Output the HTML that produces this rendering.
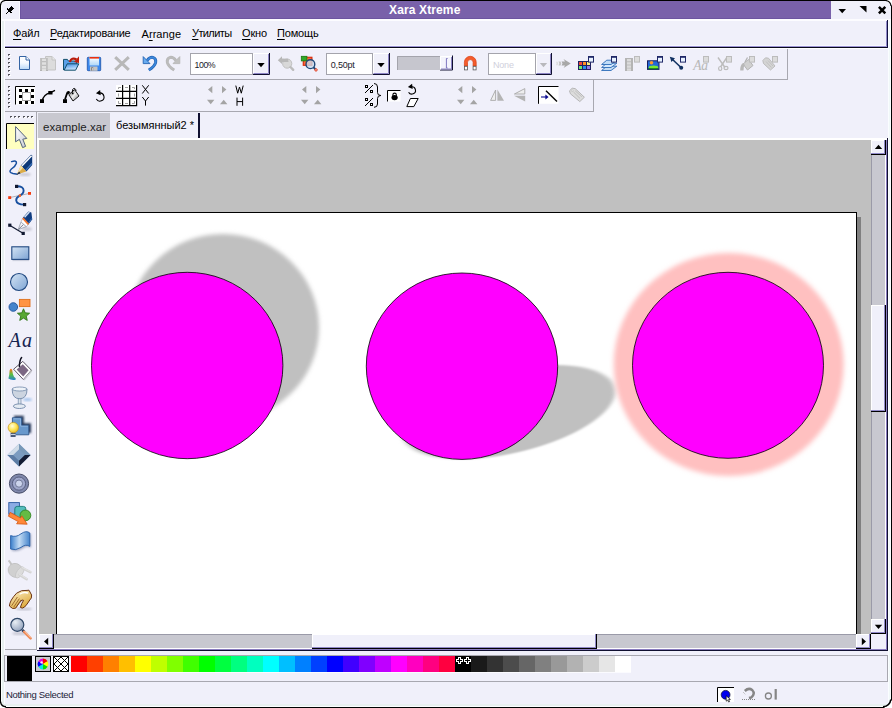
<!DOCTYPE html>
<html><head><meta charset="utf-8"><title>Xara Xtreme</title>
<style>
*{box-sizing:border-box;margin:0;padding:0}
html,body{width:892px;height:708px;overflow:hidden;background:#f0f0fa;font-family:"Liberation Sans",sans-serif}
.a{position:absolute}
#win{position:absolute;left:0;top:0;width:892px;height:708px;background:#f0f0fa;overflow:hidden}
.t{position:absolute;white-space:nowrap;color:#000;line-height:1}
.t u{text-decoration:underline;text-underline-offset:2.4px}
svg{position:absolute;overflow:visible}
.sbb{background:#f0f0fa;border-right:1px solid #000;border-bottom:1px solid #000;box-shadow:inset -1px -1px 0 #9088c8, inset 1px 1px 0 #fff}
.cb{background:#fff;border:1px solid #a0a0a8}
#win i{display:block;width:16px;height:16px;flex:none}
</style></head><body><div id="win">
<div class="a" style="left:0px;top:0px;width:892px;height:1px;background:#000;"></div>
<div class="a" style="left:0px;top:0px;width:1px;height:708px;background:#000;"></div>
<div class="a" style="left:891px;top:0px;width:1px;height:708px;background:#000;"></div>
<div class="a" style="left:0px;top:707px;width:892px;height:1px;background:#000;"></div>
<div class="a" style="left:1px;top:1px;width:1px;height:706px;background:#fcffff;"></div>
<div class="a" style="left:2px;top:19px;width:2px;height:688px;background:#e8f0f0;"></div>
<div class="a" style="left:4px;top:19px;width:1px;height:688px;background:#fbfbff;"></div>
<div class="a" style="left:888px;top:20px;width:3px;height:687px;background:#f0f8f8;"></div>
<div class="a" style="left:888px;top:20px;width:1px;height:687px;background:#fafdff;"></div>
<div class="a" style="left:890px;top:20px;width:1px;height:687px;background:#fafefe;"></div>
<div class="a" style="left:1px;top:704px;width:890px;height:2px;background:#e8f0f0;"></div>
<div class="a" style="left:1px;top:706px;width:890px;height:1px;background:#fbffff;"></div>
<div class="a" style="left:1px;top:1px;width:19px;height:1px;background:#fbfbff;"></div>
<div class="a" style="left:19px;top:1px;width:1px;height:18px;background:#fbfbff;"></div>
<div class="a" style="left:20px;top:1px;width:811px;height:18px;background:#7961aa;"></div>
<div class="a" style="left:20px;top:18px;width:811px;height:1px;background:#6c55a0;"></div>
<div class="a" style="left:20px;top:1px;width:1px;height:18px;background:#6c55a0;"></div>
<div class="t" style="left:389px;top:4px;font-size:12px;color:#fff;font-weight:bold;letter-spacing:0.13px">Xara Xtreme</div>
<div class="a" style="left:1px;top:19px;width:890px;height:2px;background:#fcfcff;"></div>
<div class="a" style="left:5px;top:45px;width:882px;height:1px;background:#f8f8ff;"></div>
<div class="a" style="left:5px;top:46px;width:882px;height:1px;background:#9c94d4;"></div>
<div class="a" style="left:5px;top:47px;width:883px;height:1px;background:#08081c;"></div>
<div class="a" style="left:5px;top:48px;width:883px;height:1px;background:#fff;"></div>
<div class="a" style="left:887px;top:20px;width:1px;height:28px;background:#101040;"></div>
<div class="a" style="left:886px;top:21px;width:1px;height:25px;background:#9088c8;"></div>
<div class="t" style="left:13px;top:28px;font-size:11px;color:#000;letter-spacing:-0.125px"><u>Ф</u>айл</div>
<div class="t" style="left:50px;top:28px;font-size:11px;color:#000;letter-spacing:-0.236px"><u>Р</u>едактирование</div>
<div class="t" style="left:141.5px;top:29px;font-size:11px;color:#000;letter-spacing:0.057px">A<u>r</u>range</div>
<div class="t" style="left:192px;top:28px;font-size:11px;color:#000;letter-spacing:-0.600px"><u>У</u>тилиты</div>
<div class="t" style="left:242px;top:28px;font-size:11px;color:#000;letter-spacing:-0.150px"><u>О</u>кно</div>
<div class="t" style="left:277px;top:28px;font-size:11px;color:#000;letter-spacing:-0.167px"><u>П</u>омощь</div>
<div class="a" style="left:5px;top:79px;width:783px;height:1px;background:#a8a8b0;"></div>
<div class="a" style="left:787px;top:49px;width:1px;height:31px;background:#a8a8b0;"></div>
<div class="a" style="left:5px;top:111px;width:589px;height:1px;background:#a8a8b0;"></div>
<div class="a" style="left:593px;top:80px;width:1px;height:32px;background:#a8a8b0;"></div>
<div class="a" style="left:36px;top:112px;width:1px;height:538px;background:#a8a8b0;"></div>
<div class="a" style="left:5px;top:649px;width:32px;height:1px;background:#a8a8b0;"></div>
<div class="a" style="left:38px;top:113px;width:72px;height:25px;background:#c8c8d0;"></div>
<div class="t" style="left:43px;top:122px;font-size:11.5px;color:#222;letter-spacing:0.04px">example.xar</div>
<div class="t" style="left:116px;top:120px;font-size:11px;color:#000;letter-spacing:-0.02px">безымянный2 *</div>
<div class="a" style="left:198px;top:113px;width:2px;height:25px;background:#101030;"></div>
<div class="a" id="canvas" style="left:39px;top:140px;width:832px;height:494px;background:#c0c0c0;overflow:hidden">
<div class="a" style="left:22px;top:77px;width:800px;height:420px;background:#808080"></div>
<div class="a" style="left:17px;top:72px;width:801px;height:425px;background:#fff;border:1px solid #000"></div>
<svg style="left:0;top:0" width="832" height="494" viewBox="39 140 832 494">
<defs>
<filter id="b1" x="-20%" y="-20%" width="140%" height="140%"><feGaussianBlur stdDeviation="1.9"/></filter>
<filter id="b2" x="-20%" y="-20%" width="140%" height="140%"><feGaussianBlur stdDeviation="2.6"/></filter>
</defs>
<ellipse cx="223" cy="327.5" rx="96" ry="93.5" fill="#c0c0c0" filter="url(#b1)"/>
<ellipse cx="187.2" cy="365.5" rx="95.7" ry="93.2" fill="#ff00ff" stroke="#000" stroke-width="0.8"/>
<ellipse cx="462" cy="366" rx="96" ry="93" fill="#c0c0c0" filter="url(#b1)" transform="matrix(1 0 -0.5 0.505 229.5 227.2)"/>
<ellipse cx="462" cy="366.2" rx="95.7" ry="93.2" fill="#ff00ff" stroke="#000" stroke-width="0.8"/>
<ellipse cx="728.7" cy="364.6" rx="115" ry="111.5" fill="#ffc0c0" filter="url(#b2)"/>
<ellipse cx="728" cy="365.3" rx="95.5" ry="93" fill="#ff00ff" stroke="#000" stroke-width="0.8"/>
</svg></div>
<div class="a" style="left:37px;top:138px;width:851px;height:2px;background:#fff;"></div>
<div class="a" style="left:37px;top:138px;width:2px;height:513px;background:#fff;"></div>
<div class="a" style="left:886px;top:140px;width:1px;height:510px;background:#8a7cc0;"></div>
<div class="a" style="left:887px;top:138px;width:1px;height:513px;background:#101030;"></div>
<div class="a" style="left:39px;top:649px;width:848px;height:1px;background:#8a7cc0;"></div>
<div class="a" style="left:37px;top:650px;width:851px;height:1px;background:#101030;"></div>
<div class="a" style="left:871px;top:140px;width:15px;height:494px;background:#c8c8d0;"></div>
<div class="a" style="left:871px;top:140px;width:1px;height:494px;background:#9a9aa8;"></div>
<div class="a" style="left:885px;top:140px;width:1px;height:494px;background:#fff;"></div>
<div class="a sbb" style="left:871px;top:140px;width:15px;height:15px"></div>
<div class="a sbb" style="left:871px;top:619px;width:15px;height:15px"></div>
<div class="a sbb" style="left:871px;top:305px;width:15px;height:107px"></div>
<div class="a" style="left:39px;top:634px;width:832px;height:15px;background:#c8c8d0;"></div>
<div class="a" style="left:39px;top:634px;width:832px;height:1px;background:#9a9aa8;"></div>
<div class="a" style="left:39px;top:648px;width:832px;height:1px;background:#fff;"></div>
<div class="a sbb" style="left:39px;top:634px;width:15px;height:15px"></div>
<div class="a sbb" style="left:856px;top:634px;width:15px;height:15px"></div>
<div class="a sbb" style="left:312px;top:634px;width:285px;height:15px"></div>
<div class="a" style="left:871px;top:634px;width:15px;height:15px;background:#f0f0fa;"></div>
<div class="a" style="left:4px;top:655px;width:884px;height:27px;border:1px solid #a8a8b0"></div>
<div class="a" style="left:7px;top:656px;width:25px;height:25px;background:#000;"></div>
<div class="a" style="left:71px;top:656px;height:16px;width:560px;display:flex"><i style="background:#ff0000"></i><i style="background:#ff4000"></i><i style="background:#ff8000"></i><i style="background:#ffbf00"></i><i style="background:#ffff00"></i><i style="background:#bfff00"></i><i style="background:#80ff00"></i><i style="background:#40ff00"></i><i style="background:#00ff00"></i><i style="background:#00ff40"></i><i style="background:#00ff80"></i><i style="background:#00ffbf"></i><i style="background:#00ffff"></i><i style="background:#00bfff"></i><i style="background:#0080ff"></i><i style="background:#0040ff"></i><i style="background:#0000ff"></i><i style="background:#4000ff"></i><i style="background:#8000ff"></i><i style="background:#bf00ff"></i><i style="background:#ff00ff"></i><i style="background:#ff00bf"></i><i style="background:#ff0080"></i><i style="background:#ff0040"></i><i style="background:#000000"></i><i style="background:#1a1a1a"></i><i style="background:#333333"></i><i style="background:#4c4c4c"></i><i style="background:#666666"></i><i style="background:#808080"></i><i style="background:#999999"></i><i style="background:#b2b2b2"></i><i style="background:#cccccc"></i><i style="background:#e6e6e6"></i><i style="background:#ffffff"></i></div>
<div class="t" style="left:6px;top:690px;font-size:9.5px;color:#1a2238;letter-spacing:-0.32px">Nothing Selected</div>
<svg id="ic" style="left:0;top:0" width="892" height="708" viewBox="0 0 892 708">
<defs>
<linearGradient id="gdoc" x1="0" y1="0" x2="0" y2="1"><stop offset="0" stop-color="#fff"/><stop offset="0.5" stop-color="#f4f9ff"/><stop offset="1" stop-color="#b8d8f8"/></linearGradient>
<linearGradient id="gfold" x1="0" y1="0" x2="0.3" y2="1"><stop offset="0" stop-color="#3c8ce0"/><stop offset="1" stop-color="#c8e4ff"/></linearGradient>
<linearGradient id="gsave" x1="0" y1="0" x2="0" y2="1"><stop offset="0" stop-color="#fff"/><stop offset="1" stop-color="#b0d8f8"/></linearGradient>
<linearGradient id="gblue" x1="0" y1="0" x2="1" y2="1"><stop offset="0" stop-color="#d4e4f4"/><stop offset="1" stop-color="#7ea4d4"/></linearGradient>
<linearGradient id="gflag" x1="0" y1="0" x2="1" y2="0"><stop offset="0" stop-color="#3c80cc"/><stop offset="0.45" stop-color="#c4dcf4"/><stop offset="1" stop-color="#4484cc"/></linearGradient>
<linearGradient id="garr" x1="0" y1="0" x2="1" y2="1"><stop offset="0" stop-color="#fff"/><stop offset="1" stop-color="#c8ccd4"/></linearGradient>
<linearGradient id="gspill" x1="0" y1="0" x2="0" y2="1"><stop offset="0" stop-color="#ff7020"/><stop offset="0.5" stop-color="#58c040"/><stop offset="1" stop-color="#2880d0"/></linearGradient>
<linearGradient id="gbk" x1="0" y1="0" x2="1" y2="1"><stop offset="0" stop-color="#606060"/><stop offset="0.5" stop-color="#f0f0f0"/><stop offset="1" stop-color="#808080"/></linearGradient>
<radialGradient id="glens" cx="0.35" cy="0.3" r="0.8"><stop offset="0" stop-color="#e8eef4"/><stop offset="1" stop-color="#8c9cb8"/></radialGradient>
<radialGradient id="gbulb" cx="0.4" cy="0.35" r="0.7"><stop offset="0" stop-color="#fffce0"/><stop offset="0.5" stop-color="#ffe860"/><stop offset="1" stop-color="#e8b820"/></radialGradient>
<linearGradient id="ghand" x1="0" y1="0" x2="0.6" y2="1"><stop offset="0" stop-color="#fff4d0"/><stop offset="1" stop-color="#dca838"/></linearGradient>
<filter id="bl1"><feGaussianBlur stdDeviation="0.8"/></filter>
</defs>
<rect x="8" y="54" width="2" height="1" fill="#505058"/><rect x="8" y="55" width="1" height="1" fill="#808088"/><rect x="9" y="55" width="2" height="1" fill="#fff"/>
<rect x="8" y="58" width="2" height="1" fill="#505058"/><rect x="8" y="59" width="1" height="1" fill="#808088"/><rect x="9" y="59" width="2" height="1" fill="#fff"/>
<rect x="8" y="62" width="2" height="1" fill="#505058"/><rect x="8" y="63" width="1" height="1" fill="#808088"/><rect x="9" y="63" width="2" height="1" fill="#fff"/>
<rect x="8" y="66" width="2" height="1" fill="#505058"/><rect x="8" y="67" width="1" height="1" fill="#808088"/><rect x="9" y="67" width="2" height="1" fill="#fff"/>
<rect x="8" y="70" width="2" height="1" fill="#505058"/><rect x="8" y="71" width="1" height="1" fill="#808088"/><rect x="9" y="71" width="2" height="1" fill="#fff"/>
<rect x="8" y="74" width="2" height="1" fill="#505058"/><rect x="8" y="75" width="1" height="1" fill="#808088"/><rect x="9" y="75" width="2" height="1" fill="#fff"/>
<rect x="8" y="86" width="2" height="1" fill="#505058"/><rect x="8" y="87" width="1" height="1" fill="#808088"/><rect x="9" y="87" width="2" height="1" fill="#fff"/>
<rect x="8" y="90" width="2" height="1" fill="#505058"/><rect x="8" y="91" width="1" height="1" fill="#808088"/><rect x="9" y="91" width="2" height="1" fill="#fff"/>
<rect x="8" y="94" width="2" height="1" fill="#505058"/><rect x="8" y="95" width="1" height="1" fill="#808088"/><rect x="9" y="95" width="2" height="1" fill="#fff"/>
<rect x="8" y="98" width="2" height="1" fill="#505058"/><rect x="8" y="99" width="1" height="1" fill="#808088"/><rect x="9" y="99" width="2" height="1" fill="#fff"/>
<rect x="8" y="102" width="2" height="1" fill="#505058"/><rect x="8" y="103" width="1" height="1" fill="#808088"/><rect x="9" y="103" width="2" height="1" fill="#fff"/>
<rect x="8" y="106" width="2" height="1" fill="#505058"/><rect x="8" y="107" width="1" height="1" fill="#808088"/><rect x="9" y="107" width="2" height="1" fill="#fff"/>
<rect x="10" y="116" width="2" height="1" fill="#505058"/><rect x="10" y="117" width="1" height="1" fill="#808088"/><rect x="11" y="117" width="2" height="1" fill="#fff"/>
<rect x="14" y="116" width="2" height="1" fill="#505058"/><rect x="14" y="117" width="1" height="1" fill="#808088"/><rect x="15" y="117" width="2" height="1" fill="#fff"/>
<rect x="18" y="116" width="2" height="1" fill="#505058"/><rect x="18" y="117" width="1" height="1" fill="#808088"/><rect x="19" y="117" width="2" height="1" fill="#fff"/>
<rect x="23" y="116" width="2" height="1" fill="#505058"/><rect x="23" y="117" width="1" height="1" fill="#808088"/><rect x="24" y="117" width="2" height="1" fill="#fff"/>
<rect x="27" y="116" width="2" height="1" fill="#505058"/><rect x="27" y="117" width="1" height="1" fill="#808088"/><rect x="28" y="117" width="2" height="1" fill="#fff"/>
<rect x="31" y="116" width="2" height="1" fill="#505058"/><rect x="31" y="117" width="1" height="1" fill="#808088"/><rect x="32" y="117" width="2" height="1" fill="#fff"/>
<polygon points="0,0 5,0 0,5" fill="#fff"/><path d="M0.5,5.5 Q0.8,0.8 5.5,0.5" fill="none" stroke="#000" stroke-width="1.2"/>
<polygon points="892,0 886,0 892,6" fill="#fff"/><path d="M891,6 Q890.6,1 885.5,0.5" fill="none" stroke="#000" stroke-width="1.2"/>
<polygon points="0,708 0,702 6,708" fill="#fff"/><path d="M0.5,701.5 Q1,706.5 6,706.8" fill="none" stroke="#000" stroke-width="1.4"/>
<polygon points="892,708 892,700 884,708" fill="#fff"/><path d="M890.8,699.5 Q890,706 883,706.8" fill="none" stroke="#000" stroke-width="1.6"/>
<g fill="#000" shape-rendering="crispEdges"><rect x="11" y="6" width="1" height="1"/><rect x="10" y="7" width="1" height="1"/><rect x="11" y="7" width="1" height="1"/><rect x="12" y="7" width="1" height="1"/><rect x="7" y="8" width="1" height="1"/><rect x="9" y="8" width="1" height="1"/><rect x="10" y="8" width="1" height="1"/><rect x="11" y="8" width="1" height="1"/><rect x="12" y="8" width="1" height="1"/><rect x="13" y="8" width="1" height="1"/><rect x="7" y="9" width="1" height="1"/><rect x="8" y="9" width="1" height="1"/><rect x="9" y="9" width="1" height="1"/><rect x="10" y="9" width="1" height="1"/><rect x="11" y="9" width="1" height="1"/><rect x="12" y="9" width="1" height="1"/><rect x="8" y="10" width="1" height="1"/><rect x="9" y="10" width="1" height="1"/><rect x="10" y="10" width="1" height="1"/><rect x="11" y="10" width="1" height="1"/><rect x="8" y="11" width="1" height="1"/><rect x="9" y="11" width="1" height="1"/><rect x="10" y="11" width="1" height="1"/><rect x="7" y="12" width="1" height="1"/><rect x="10" y="12" width="1" height="1"/><rect x="11" y="12" width="1" height="1"/><rect x="6" y="13" width="1" height="1"/></g>
<polygon points="838.5,9 846,9 842.2,13.3" fill="#000"/>
<polygon points="859.5,6 866.5,6 866.5,12.5" fill="#000"/>
<path d="M878.9,6.9 L885.3,13.3 M885.3,6.9 L878.9,13.3" stroke="#000" stroke-width="2.5" fill="none"/>
<path d="M19.5,56.5 H26 L29.5,60 V69.5 H19.5 Z" fill="url(#gdoc)" stroke="#3464a4" stroke-width="1"/><path d="M26,56.5 V60 H29.5" fill="#fff" stroke="#3464a4" stroke-width="1"/>
<path d="M45.5,56.5 H52 L55.5,60 V70 H45.5 Z" fill="#dcdcdc" stroke="#c4c4c4"/><path d="M52,56.5 V60 H55.5" fill="#e8e8e8" stroke="#c4c4c4"/>
<rect x="40" y="58" width="8" height="13" fill="#b4b4b4"/>
<g fill="#e0e0e0"><rect x="42" y="58.6" width="4" height="2.6"/><rect x="42" y="62.2" width="4" height="2.6"/><rect x="42" y="65.8" width="4" height="2.6"/><rect x="42" y="68.60000000000001" width="4" height="2.6"/></g>
<g fill="#ececec"><rect x="40.4" y="58.5" width="1" height="1"/><rect x="46.6" y="58.5" width="1" height="1"/><rect x="40.4" y="60.5" width="1" height="1"/><rect x="46.6" y="60.5" width="1" height="1"/><rect x="40.4" y="62.5" width="1" height="1"/><rect x="46.6" y="62.5" width="1" height="1"/><rect x="40.4" y="64.5" width="1" height="1"/><rect x="46.6" y="64.5" width="1" height="1"/><rect x="40.4" y="66.5" width="1" height="1"/><rect x="46.6" y="66.5" width="1" height="1"/><rect x="40.4" y="68.5" width="1" height="1"/><rect x="46.6" y="68.5" width="1" height="1"/></g>
<path d="M63.5,70 V59.4 H67.4 L68.4,61 H76.6 V64" fill="#5aa0e8" stroke="#14506c" stroke-width="1"/>
<path d="M64.2,70.2 L67.2,63.8 H78.8 L75.6,70.2 Z" fill="url(#gfold)" stroke="#14506c" stroke-width="1" stroke-linejoin="round"/>
<path d="M69.8,62 Q71.6,57 76.6,59.4" fill="none" stroke="#b81c0c" stroke-width="2.1"/><polygon points="74,61.9 79,56.2 79,63" fill="#c0200c"/>
<rect x="87.3" y="57.3" width="13.4" height="13.4" rx="0.8" fill="#3c88ec" stroke="#1c50a8" stroke-width="0.8"/>
<rect x="89.5" y="57" width="9.5" height="8.5" fill="url(#gsave)"/><rect x="89.5" y="57" width="9.5" height="1.6" fill="#e83010"/>
<rect x="90" y="66.5" width="7.5" height="4.3" fill="#c4c4c4"/><rect x="91.2" y="67.3" width="2" height="3.3" fill="#787878"/><rect x="92" y="68" width="1.2" height="2.6" fill="#c4c4c4"/>
<path d="M115.2,57.2 L128.8,69.8 M128.8,57.2 L115.2,69.8" stroke="#b8b8b8" stroke-width="3" fill="none"/>
<g><path d="M147.2,60.4 Q149.8,57 152.8,57.4 Q156.4,58.4 155.6,62.6 Q154.4,66.8 148.8,70" fill="none" stroke="#2464b4" stroke-width="3"/><path d="M147.2,60.4 Q149.8,57 152.8,57.4 Q156.4,58.4 155.6,62.6 Q154.4,66.8 148.8,70" fill="none" stroke="#3c88dc" stroke-width="1.6"/><polygon points="143.2,56.6 143.2,63.6 150,63.6" fill="#68acf0" stroke="#2464b4" stroke-width="0.9" stroke-linejoin="round"/></g>
<g transform="translate(323,0) scale(-1,1)"><path d="M147.2,60.4 Q149.8,57 152.8,57.4 Q156.4,58.4 155.6,62.6 Q154.4,66.8 148.8,70" fill="none" stroke="#b8b8b8" stroke-width="3"/><path d="M147.2,60.4 Q149.8,57 152.8,57.4 Q156.4,58.4 155.6,62.6 Q154.4,66.8 148.8,70" fill="none" stroke="#bcbcbc" stroke-width="1.6"/><polygon points="143.2,56.6 143.2,63.6 150,63.6" fill="#c0c0c0" stroke="#b8b8b8" stroke-width="0.9" stroke-linejoin="round"/></g>
<rect x="190.5" y="53.5" width="62" height="21" fill="#fff" stroke="#a4a4ac"/>
<rect x="253" y="53" width="17" height="22" fill="#f0f0fa"/>
<path d="M269.5,53 V74.5 H253" fill="none" stroke="#101030" stroke-width="1"/>
<path d="M268.5,54 V73.5 H253.5" fill="none" stroke="#8c84c4" stroke-width="1"/>
<path d="M253.5,73 V53.5 H268" fill="none" stroke="#fff" stroke-width="1"/>
<polygon points="257.3,63 264.7,63 261.0,67.2" fill="#000"/>
<rect x="326.5" y="53.5" width="46" height="21" fill="#fff" stroke="#a4a4ac"/>
<rect x="373" y="53" width="17" height="22" fill="#f0f0fa"/>
<path d="M389.5,53 V74.5 H373" fill="none" stroke="#101030" stroke-width="1"/>
<path d="M388.5,54 V73.5 H373.5" fill="none" stroke="#8c84c4" stroke-width="1"/>
<path d="M373.5,73 V53.5 H388" fill="none" stroke="#fff" stroke-width="1"/>
<polygon points="377.3,63 384.7,63 381.0,67.2" fill="#000"/>
<rect x="488.5" y="53.5" width="47" height="21" fill="#fff" stroke="#a4a4ac"/>
<rect x="536" y="53" width="16" height="22" fill="#f0f0fa"/>
<path d="M551.5,53 V74.5 H536" fill="none" stroke="#101030" stroke-width="1"/>
<path d="M550.5,54 V73.5 H536.5" fill="none" stroke="#8c84c4" stroke-width="1"/>
<path d="M536.5,73 V53.5 H550" fill="none" stroke="#fff" stroke-width="1"/>
<polygon points="539.8,63 547.2,63 543.5,67.2" fill="#b8b8bc"/>
<text x="194.5" y="68.3" font-size="8.8" fill="#1a1a2a" letter-spacing="-0.45">100%</text>
<text x="330.8" y="68.3" font-size="9" fill="#1a1a2a" letter-spacing="-0.2">0,50pt</text>
<text x="493" y="68.3" font-size="9" fill="#d0d0dc" letter-spacing="-0.2">None</text>
<circle cx="287.2" cy="63.6" r="4.6" fill="#d8d8d8" stroke="#c0c0c0" stroke-width="1"/><path d="M290.5,67 L293.2,69.8" stroke="#bcbcbc" stroke-width="2.4" stroke-linecap="round"/>
<path d="M277.8,60.2 L282,56.2 L282,58.6 L288,58.8 L288.5,62 L282,62 L282,64 Z" fill="#b8b8b8"/>
<rect x="303.3" y="57.3" width="8.6" height="8" fill="#ff6838" stroke="#d83010" stroke-width="1.2"/>
<rect x="301.3" y="56.3" width="5.6" height="4.6" fill="#30a828" stroke="#187810" stroke-width="0.8"/>
<circle cx="310.4" cy="64.2" r="4.4" fill="#c8dcf0" fill-opacity="0.78" stroke="#204878" stroke-width="1.4"/>
<path d="M313.6,67.4 L315.4,69.2" stroke="#204878" stroke-width="2"/><circle cx="316" cy="69.9" r="1.2" fill="#fff" stroke="#e03010" stroke-width="1"/>
<rect x="397" y="56" width="44" height="14" fill="#c6c6ce"/><path d="M397.5,70 V56.5 H441" fill="none" stroke="#a4a4ac"/>
<rect x="440" y="56" width="13" height="14.5" fill="#f4f4fc"/><path d="M452.5,55.5 V70 H440" fill="none" stroke="#101030"/><path d="M451.5,57 V69 H441" fill="none" stroke="#8c84c4"/><path d="M440.5,69.5 V56.5 H451" fill="none" stroke="#fff"/>
<path d="M447.6,58.5 H446.4 V68 H447.6" fill="none" stroke="#7068b8" stroke-width="0.9"/>
<path d="M464.4,66 V62.2 A5.9,5.9 0 0 1 476.2,62.2 V66 H473.1 V62.4 A2.8,2.8 0 0 0 467.5,62.4 V66 Z" fill="#f45c2c" stroke="#d83c10" stroke-width="0.7"/>
<rect x="464.5" y="66.3" width="3" height="3.6" fill="#fff" stroke="#585858" stroke-width="0.8"/><rect x="473.1" y="66.3" width="3" height="3.6" fill="#fff" stroke="#585858" stroke-width="0.8"/>
<path d="M563.5,59 L570.8,63.5 L563.5,68 L565,65.5 L561.5,65.5 L562.5,63.5 L561.5,61.5 L565,61.5 Z" fill="#a8a8a8"/><path d="M558.5,61.5 h2 l0.8,2 l-0.8,2 h-2 l0.8,-2 Z" fill="#c4c4c4"/><path d="M556,61.8 h1.6 l0.6,1.7 l-0.6,1.7 h-1.6 l0.6,-1.7 Z" fill="#dcdcdc"/>
<rect x="578" y="61" width="13" height="9" fill="#202060"/>
<rect x="579" y="62" width="3" height="3" fill="#f04838"/>
<rect x="583" y="62" width="3" height="3" fill="#ff9020"/>
<rect x="587" y="62" width="3" height="3" fill="#f8f080"/>
<rect x="579" y="66" width="3" height="3" fill="#70e868"/>
<rect x="583" y="66" width="3" height="3" fill="#2090f0"/>
<rect x="587" y="66" width="3" height="3" fill="#9078e8"/>
<rect x="588.5" y="56.5" width="5" height="5.6" fill="#e8f2ff" stroke="#202868"/><rect x="588" y="56" width="6" height="1.8" fill="#202868"/>
<path d="M601.6,70.5 L606.8,66.2 H616.8 L611,70.5 Z" fill="#c4dcf4" stroke="#2c6cb8" stroke-width="0.9" stroke-linejoin="round"/>
<path d="M601.6,67.5 L606.8,63.2 H616.8 L611,67.5 Z" fill="#d4e8fc" stroke="#2c6cb8" stroke-width="0.9" stroke-linejoin="round"/>
<path d="M601.6,64.5 L606.8,60.2 H616.8 L611,64.5 Z" fill="#c0dcf8" stroke="#2c6cb8" stroke-width="0.9" stroke-linejoin="round"/>
<rect x="611.5" y="56.5" width="5" height="5.6" fill="#e8f2ff" stroke="#202868"/><rect x="611" y="56" width="6" height="1.8" fill="#202868"/>
<rect x="625" y="58" width="8" height="13" fill="#b4b4b4"/><g fill="#dcdcdc"><rect x="627" y="59" width="4" height="2.4"/><rect x="627" y="62.2" width="4" height="2.4"/><rect x="627" y="65.4" width="4" height="2.4"/><rect x="627" y="68.4" width="4" height="2.4"/></g>
<rect x="634.5" y="56.5" width="5" height="5.6" fill="#dcdcdc" stroke="#bcbcbc"/>
<rect x="647.5" y="60.8" width="11.5" height="8.6" fill="#2468d8" stroke="#182060"/><circle cx="651.5" cy="62.8" r="1.8" fill="#ff9828"/><ellipse cx="653.5" cy="67.2" rx="4.8" ry="1.7" fill="#78ec30"/><rect x="648" y="68.2" width="10.5" height="1" fill="#107818"/>
<rect x="657.5" y="56.5" width="5" height="5.6" fill="#e8f2ff" stroke="#202868"/><rect x="657" y="56" width="6" height="1.8" fill="#202868"/>
<path d="M681,67.5 L671.5,58.5" stroke="#103060" stroke-width="1.6"/><circle cx="681.2" cy="67.8" r="2" fill="#103060"/><polygon points="669.8,56.8 675,58.2 671.4,62" fill="#103060"/>
<rect x="680.5" y="56.5" width="5" height="5.6" fill="#e8f2ff" stroke="#202868"/><rect x="680" y="56" width="6" height="1.8" fill="#202868"/>
<text x="693.2" y="70.4" font-family="Liberation Serif" font-style="italic" font-size="13.6" fill="#b8b8b8" letter-spacing="-0.2">Aa</text>
<rect x="703.5" y="56.5" width="5" height="5.6" fill="#dcdcdc" stroke="#bcbcbc"/>
<path d="M718,57.5 L725,67.5 M726.5,58 L720.5,67" stroke="#bcbcbc" stroke-width="1.4" fill="none"/><ellipse cx="720.2" cy="68.5" rx="1.6" ry="2" fill="none" stroke="#bcbcbc" stroke-width="1.2"/><ellipse cx="726" cy="68" rx="2" ry="1.6" fill="none" stroke="#bcbcbc" stroke-width="1.2"/>
<rect x="726.5" y="56.5" width="5" height="5.6" fill="#dcdcdc" stroke="#bcbcbc"/>
<path d="M743,64 L748.5,59.5 L753,65.5 L747.5,70 Z" fill="#d0d0d0" stroke="#b4b4b4"/><path d="M743,63 Q740,65 740.2,70.5 H743.5 Q743,67 745,65" fill="#b8b8b8"/><path d="M745,62 L747.5,57.5" stroke="#b0b0b0" stroke-width="1.2"/>
<rect x="749.5" y="56.5" width="5" height="5.6" fill="#dcdcdc" stroke="#bcbcbc"/>
<path d="M762.8,60.5 L765.5,57.8 L768.5,58.2 L775,66 L770.5,70 L763.5,63.5 Z" fill="#d4d4d4" stroke="#b8b8b8" stroke-width="0.9"/><path d="M766,61.5 L771.5,67.5 M768,60.5 L773,66" stroke="#bcbcbc" stroke-width="0.8"/>
<rect x="772.5" y="56.5" width="5" height="5.6" fill="#dcdcdc" stroke="#bcbcbc"/>
<rect x="15" y="86" width="20" height="18.5" fill="#fff"/><path d="M15.5,104.5 V86.5 H35" fill="none" stroke="#000" stroke-width="1"/>
<g fill="#000" shape-rendering="crispEdges"><rect x="19" y="89" width="3" height="3"/><rect x="25" y="89" width="3" height="3"/><rect x="31" y="89" width="3" height="3"/><rect x="19" y="95" width="3" height="3"/><rect x="31" y="95" width="3" height="3"/><rect x="19" y="101" width="3" height="3"/><rect x="25" y="101" width="3" height="3"/><rect x="31" y="101" width="3" height="3"/></g>
<rect x="22.5" y="92.5" width="8" height="8" fill="#fff" stroke="#a0a0a0"/>
<path d="M42,101 Q44,94 50,92.8 L55,90.3" fill="none" stroke="#000" stroke-width="1.3"/><rect x="40" y="99.2" width="4" height="3.8" fill="#000"/><rect x="48.3" y="91" width="4.2" height="3.5" fill="#000"/>
<rect x="63" y="99.2" width="4" height="3.8" fill="#000"/><path d="M65,99.5 L66.8,94 L69.5,91.8" stroke="#000" stroke-width="1.8" fill="none"/><path d="M66,93.5 q0.6,-2.6 3.4,-2.4 l-0.6,3 z" fill="#000"/>
<path d="M68.8,94.6 L74.6,89.6 L79,96 L73,101 Z" fill="url(#gbk)" stroke="#000" stroke-width="0.9"/><path d="M72.5,92.5 V89.5 Q74,87 75.8,89.5 L76,91" fill="none" stroke="#000" stroke-width="0.9"/><circle cx="72.7" cy="93.4" r="0.9" fill="#000"/>
<path d="M99.54,92.92 A4.1,4.1 0 1 1 96.35,99.05" fill="none" stroke="#000" stroke-width="1.1"/>
<polygon points="95.94,93.22 100.14,89.92 100.74,95.32" fill="#000"/>
<rect x="116" y="85" width="21" height="21" fill="#fff"/>
<g stroke="#a0a0a0" stroke-width="1" fill="none"><path d="M118.5,89 V87.5 H121 M125,87.5 H128 M132,87.5 H134.5 V89 M118.5,93.5 V96.5 M134.5,93.5 V96.5 M118.5,101 V103.5 H121 M125,103.5 H128 M132,103.5 H134.5 V101"/></g>
<g stroke="#000" stroke-width="1.2" fill="none"><path d="M122.6,85 V106 M129.7,85 V106 M136.6,85 V106 M116,91.3 H137 M116,98.4 H137 M116,105.6 H137.2"/></g>
<g stroke="#000" stroke-width="1" fill="none"><path d="M142.3,85.3 L148.7,93.5 M148.7,85.3 L142.3,93.5 M142.3,97 L145.5,101 L148.7,97 M145.5,101 V105.6"/></g>
<g fill="#a4a4a4"><polygon points="208,89.6 212.3,86 212.3,93.2"/><polygon points="222,86 222,93.2 226.4,89.6"/><polygon points="207,99.8 214.4,99.8 210.7,104.2"/><polygon points="220,104.2 227.4,104.2 223.7,99.8"/></g>
<g fill="#a4a4a4"><polygon points="302,89.6 306.3,86 306.3,93.2"/><polygon points="316,86 316,93.2 320.4,89.6"/><polygon points="301,99.8 308.4,99.8 304.7,104.2"/><polygon points="314,104.2 321.4,104.2 317.7,99.8"/></g>
<g fill="#a4a4a4"><polygon points="458,89.6 462.3,86 462.3,93.2"/><polygon points="472,86 472,93.2 476.4,89.6"/><polygon points="457,99.8 464.4,99.8 460.7,104.2"/><polygon points="470,104.2 477.4,104.2 473.7,99.8"/></g>
<g stroke="#000" stroke-width="1" fill="none"><path d="M235.8,85.6 L237.7,93.2 L239.5,87 L241.3,93.2 L243.2,85.6 M237,97.6 V105.8 M242.6,97.6 V105.8 M237,101.6 H242.6"/></g>
<path d="M365,93 L373,85" stroke="#000" stroke-width="1"/><rect x="365.5" y="85.5" width="2" height="2" fill="#fff" stroke="#000"/><rect x="370.5" y="90.5" width="2" height="2" fill="#fff" stroke="#000"/>
<path d="M365,106 L373,98" stroke="#000" stroke-width="1"/><rect x="365.5" y="98.5" width="2" height="2" fill="#fff" stroke="#000"/><rect x="370.5" y="103.5" width="2" height="2" fill="#fff" stroke="#000"/>
<path d="M374,83.5 Q377.5,83.5 377.5,87 V92.5 Q377.5,95.5 380.8,95.5 Q377.5,95.5 377.5,98.5 V104 Q377.5,107.3 374,107.3" fill="none" stroke="#000" stroke-width="1"/>
<rect x="387" y="90" width="13.5" height="11.5" fill="#fff"/><path d="M387.5,101.5 V90.5 H400.5" fill="none" stroke="#000" stroke-width="1"/>
<ellipse cx="394.6" cy="97.6" rx="3.1" ry="2.6" fill="#000"/><path d="M392.9,96 V94.8 A1.7,1.7 0 0 1 396.3,94.8 V96" fill="none" stroke="#000" stroke-width="1.1"/>
<path d="M411.48,86.71 A3.7,3.7 0 1 1 408.60,92.25" fill="none" stroke="#000" stroke-width="1.1"/>
<polygon points="407.88,87.01 412.08,83.71 412.68,89.11" fill="#000"/>
<polygon points="406.8,106.6 413.8,106.6 418.2,98.5 410.4,98.5" fill="#fff" stroke="#000" stroke-width="1"/>
<polygon points="490.6,100.4 495.6,90 495.6,100.4" fill="#eee" stroke="#a8a8a8" stroke-width="0.9"/><polygon points="497.4,89.6 497.4,100.8 504,100.8" fill="#b4b4b4"/>
<polygon points="514.4,94 524.8,88.6 524.8,94" fill="#eee" stroke="#a8a8a8" stroke-width="0.9"/><polygon points="514,95.8 525.2,95.8 525.2,101.6" fill="#b4b4b4"/>
<rect x="538" y="86" width="20.5" height="17.8" fill="#fff"/><path d="M538.5,103.8 V86.5 H558.5" fill="none" stroke="#000" stroke-width="1"/>
<path d="M546,90.8 L557,101.6" stroke="#000" stroke-width="1.4"/><path d="M541,97 H546.5" stroke="#0a0a90" stroke-width="1.1"/><polygon points="545.4,94.4 548.6,97 545.4,99.6" fill="#0a0a90"/>
<path d="M569.5,90.8 L572.2,88.2 L575.2,88.6 L584.4,97.2 L579.8,101.6 L570.4,93.8 Z" fill="#dcdcdc" stroke="#b0b0b0" stroke-width="0.9"/><path d="M573.5,92 L580,98.4 M575.2,90.8 L581.8,96.8" stroke="#b8b8b8" stroke-width="0.8"/><circle cx="572.3" cy="90.8" r="0.8" fill="#fff" stroke="#aaa" stroke-width="0.5"/>
<rect x="6" y="123" width="28" height="26" fill="#ffffc0"/><path d="M6.5,149 V123.5 H34" fill="none" stroke="#000"/>
<path d="M15.6,126.6 L15.6,141.8 L19.4,139.4 L22.6,147.6 L25.6,146.4 L22.8,139.2 L26.8,138.4 Z" fill="url(#garr)" stroke="#54647c" stroke-width="1" stroke-linejoin="round"/>
<path d="M11.6,161.6 Q17,160 16.4,163.2 Q15.6,166 11.4,169 Q7.8,172.4 13,173.6 L17.5,174.2" fill="none" stroke="#1850a0" stroke-width="1.5" stroke-linecap="round"/>
<ellipse cx="25" cy="174.5" rx="6" ry="1.6" fill="#c8c8d4" filter="url(#bl1)"/>
<path d="M20.8,165.6 L31,154.8 L32.2,155.2 L32.2,165 L26.4,171.6 Z" fill="#0c3878"/><path d="M21.8,166 L31.6,155.8" stroke="#fff" stroke-width="1.5"/><path d="M25.8,170.2 L32,163.4" stroke="#3c74bc" stroke-width="1.2"/>
<path d="M20.8,165.6 L26.4,171.6 L16.8,174.4 Z" fill="#dcac48"/><path d="M20.8,165.6 L23,167.8 L16.8,174.4 Z" fill="#f8e4a8"/><path d="M19.2,171.6 L20.6,173.4 L16.6,174.6 Z" fill="#203050"/>
<path d="M9.5,197.6 L29.5,193.4" stroke="#a8a8b0" stroke-width="0.9"/>
<path d="M16.5,186.2 Q23.6,186 23.6,190.6 Q23.6,194 19.8,195.6 Q16,197.6 16.2,200.4 Q16.6,204.6 24.4,204.6" fill="none" stroke="#1850a0" stroke-width="1.9"/>
<rect x="15" y="184.8" width="3.2" height="3.2" fill="#101830"/><rect x="23" y="203" width="3.2" height="3.2" fill="#101830"/>
<rect x="8.2" y="196.2" width="3" height="2.8" fill="#f43c10"/><rect x="28" y="192" width="3" height="2.8" fill="#f43c10"/><rect x="18.8" y="194.4" width="2.2" height="2.4" fill="#f46020"/>
<ellipse cx="27" cy="229" rx="5" ry="1.8" fill="#c8c8d4" filter="url(#bl1)"/>
<path d="M9.6,225.2 L23.4,233.4" stroke="#101830" stroke-width="1.2"/><rect x="8.2" y="223.6" width="3.2" height="3.2" fill="#101830"/><rect x="21.6" y="231.8" width="3.2" height="3.2" fill="#101830"/>
<path d="M18.2,229.6 L21,222 L26.4,226.6 Z" fill="#f4f4f8" stroke="#8890a0" stroke-width="0.7"/><path d="M18.6,229.2 L23.4,224.6" stroke="#303850" stroke-width="0.6"/>
<path d="M21,222 L22.8,218 L28.4,224.4 L26.4,226.6 Z" fill="#fff" stroke="#98a0b0" stroke-width="0.6"/>
<path d="M22.8,217.8 L28.4,211.6 L31.4,212.4 L32.2,219.4 L28.4,224.6 Z" fill="#103c80"/><path d="M22.8,218.2 L28.4,224.4" stroke="#f47830" stroke-width="1.8"/><path d="M24.6,217.2 L29.4,212" stroke="#d8e4f4" stroke-width="1.4"/><path d="M28.6,223 L31.8,218.4" stroke="#3c74bc" stroke-width="1"/>
<rect x="11.8" y="246.8" width="17" height="12.6" fill="url(#gblue)" stroke="#204880" stroke-width="1.1"/><rect x="12.5" y="260.2" width="16.6" height="0.9" fill="#c4c8d8"/>
<circle cx="19" cy="282" r="8.5" fill="url(#gblue)" stroke="#204880" stroke-width="1.1"/>
<circle cx="13.3" cy="307" r="4.3" fill="#4484cc" stroke="#20549c" stroke-width="0.9"/>
<rect x="19.4" y="299.4" width="10.6" height="7.2" fill="#ff9444" stroke="#e0701c" stroke-width="0.9"/>
<polygon points="23.50,308.80 25.20,312.85 29.59,313.22 26.26,316.10 27.26,320.38 23.50,318.10 19.74,320.38 20.74,316.10 17.41,313.22 21.80,312.85" fill="#58a834" stroke="#307418" stroke-width="0.9" stroke-linejoin="round"/>
<text x="8.4" y="346.6" font-family="Liberation Serif" font-style="italic" font-size="20" fill="#162450" letter-spacing="1.3">Aa</text>
<path d="M8.4,378.6 Q9.4,376 9.6,370.6 Q10.6,367.4 12.2,370 Q12.6,374 14,376.8 Q16.6,378.4 15.6,379.8 Q11,380.6 8.4,378.6 Z" fill="url(#gspill)"/>
<path d="M13.6,369.2 L22.8,361.4 L31.4,370.2 L23.4,379.6 Z" fill="#fff" stroke="#484050" stroke-width="0.9"/><path d="M16.6,369.4 L22.8,364.2 L28.6,370.2 L23.2,376.6 Z" fill="#7c6884"/><path d="M24,380 L31.6,371" stroke="#c8c8d0" stroke-width="1.4"/>
<path d="M19.4,366.6 Q19.6,360 21.6,357.6" fill="none" stroke="#101020" stroke-width="1.5" stroke-linecap="round"/>
<ellipse cx="27.5" cy="399.6" rx="4.4" ry="1.5" fill="#a4c4ec" filter="url(#bl1)"/>
<path d="M12.2,389 Q12,398.6 19.6,398.8 Q27.2,398.6 27,389 Z" fill="#ccd4e0" stroke="#7088a8" stroke-width="0.9"/><ellipse cx="19.6" cy="389" rx="7.4" ry="2" fill="#eef2f8" stroke="#7088a8" stroke-width="0.8"/>
<rect x="18.2" y="398.8" width="2.8" height="6.4" fill="#dce4ec" stroke="#7088a8" stroke-width="0.7"/><ellipse cx="19.4" cy="406.2" rx="6" ry="2.3" fill="#e4eaf2" stroke="#7088a8" stroke-width="0.9"/>
<path d="M14,415.8 H23.8 V423.2 H31 V433 H14 Z" fill="#283858" filter="url(#bl1)"/>
<path d="M12.4,417.8 H21.6 V425.2 H28.8 V434.8 H12.4 Z" fill="#6898cc" stroke="#30588c" stroke-width="0.9"/><path d="M13.4,418.8 H20.6 V426.2 H27.8" fill="none" stroke="#98bce4" stroke-width="0.8"/>
<rect x="10.6" y="432.6" width="5" height="4.4" fill="#485878"/><rect x="10.6" y="434" width="5" height="1" fill="#c8d0e0"/>
<circle cx="13.3" cy="427.6" r="5.2" fill="url(#gbulb)" stroke="#c89818" stroke-width="0.7"/>
<polygon points="19,443.8 30.6,455 19,466.6 7.4,455" fill="#88a8c8"/>
<polygon points="19,443.8 7.4,455 13.4,455 19,449.6" fill="#d0dce8"/><polygon points="19,443.8 30.6,455 24.6,455 19,449.6" fill="#7898b8"/><polygon points="7.4,455 19,466.6 19,460.6 13.4,455" fill="#5c7ca4"/><polygon points="30.6,455 19,466.6 19,460.6 24.6,455" fill="#141c34"/><polygon points="19,449.6 24.6,455 19,460.6 13.4,455" fill="#7c9cc0"/>
<circle cx="19" cy="483.6" r="9.6" fill="#8088ac" stroke="#484e68" stroke-width="1"/><circle cx="19" cy="483.6" r="6.6" fill="#a0a8cc" stroke="#505878" stroke-width="0.9"/><circle cx="19" cy="483.6" r="3.6" fill="#ccd4ec" stroke="#606888" stroke-width="0.8"/>
<rect x="8.8" y="502.6" width="10.6" height="11.6" fill="#8cace4" stroke="#2858a0" stroke-width="0.9"/>
<rect x="14.8" y="506.4" width="11" height="12.4" rx="2.4" fill="#54bcbc" stroke="#187878" stroke-width="0.9"/>
<circle cx="25.4" cy="515.4" r="5.4" fill="#64bc44" stroke="#308420" stroke-width="0.9"/>
<path d="M10.2,512.4 L20.6,518 L21.8,515.8 L27.2,524.2 L16.6,523.8 L18.2,521.6 L8.4,516.2 Z" fill="#ff8838" stroke="#d45410" stroke-width="0.8" stroke-linejoin="round"/>
<path d="M10.6,535.6 Q16,537.8 21,533.8 Q26.4,530 29.8,533 L29.8,546.4 Q26,543.6 21,547.4 Q15.6,551 10.6,549 Z" fill="#a0a8c0" transform="translate(1.2,1.4)" filter="url(#bl1)"/>
<path d="M10.6,535.6 Q16,537.8 21,533.8 Q26.4,530 29.8,533 L29.8,546.4 Q26,543.6 21,547.4 Q15.6,551 10.6,549 Z" fill="url(#gflag)" stroke="#2860a8" stroke-width="0.9"/>
<path d="M8.6,560.4 Q10.4,562.4 11.6,565" fill="none" stroke="#c4c4c4" stroke-width="2"/>
<ellipse cx="15.4" cy="570.4" rx="7.4" ry="6.8" transform="rotate(35 15.4 570.4)" fill="#d0d0d0" stroke="#c0c0c0" stroke-width="0.8"/><ellipse cx="19.8" cy="572.4" rx="6.4" ry="3" transform="rotate(-56 19.8 572.4)" fill="#dcdcdc" stroke="#c4c4c4" stroke-width="0.7"/>
<path d="M22.4,568.2 L30.4,572.2 M19.2,574.6 L26.6,579.2" stroke="#d4d4d4" stroke-width="2.6" stroke-linecap="round"/><path d="M22.4,567.6 L30.4,571.6 M19.2,574 L26.6,578.6" stroke="#e4e4e4" stroke-width="1" stroke-linecap="round"/>
<ellipse cx="24" cy="609" rx="8" ry="1.6" fill="#c8c8d4" filter="url(#bl1)"/>
<path d="M9.4,606 Q9.6,600.6 16.6,593.2 Q21.4,589.6 27,590.4 L29,590.2 L31.6,595 Q32,598.4 29.8,600 Q27,604.6 24.6,607 Q22,609 20.4,607.4 Q21.6,603 23.6,600.4 L22,600 Q18.6,603.4 15.6,608.2 Q12.6,609.8 9.4,606 Z" fill="url(#ghand)" stroke="#6c3414" stroke-width="1" stroke-linejoin="round"/>
<path d="M11.6,605.8 L17.4,597 M13.8,607 L19.4,598.6 M16,607.4 L21,599.8" stroke="#8c5420" stroke-width="0.8" fill="none"/><path d="M20,594 Q24,591.6 27.6,593" stroke="#fff" stroke-width="1.4" fill="none" stroke-linecap="round"/>
<ellipse cx="20" cy="633.5" rx="8" ry="1.6" fill="#c8c8d4" filter="url(#bl1)"/>
<path d="M22.2,629.8 L24.4,632" stroke="#283c5c" stroke-width="2.6"/><path d="M24.2,631.8 L30.6,638.4" stroke="#f08c58" stroke-width="2.6" stroke-linecap="round"/><path d="M24.8,631.4 L30.8,637.6" stroke="#ffd8c0" stroke-width="0.8"/>
<circle cx="17.3" cy="624.8" r="6.5" fill="url(#glens)" stroke="#304868" stroke-width="1.2"/>
<polygon points="874.8,149 882.2,149 878.5,144.8" fill="#000"/><polygon points="874.8,624.8 882.2,624.8 878.5,629" fill="#000"/>
<polygon points="48.2,637.8 48.2,645.2 44,641.5" fill="#000"/><polygon points="861.8,637.8 861.8,645.2 866,641.5" fill="#000"/>
<rect x="35.5" y="656.5" width="15" height="15" fill="#c8c8d0" stroke="#000"/>
<path d="M43,664 L43.00,658.60 A5.4,5.4 0 0 1 47.68,661.30 Z" fill="#ff0000"/>
<path d="M43,664 L47.68,661.30 A5.4,5.4 0 0 1 47.68,666.70 Z" fill="#ffff00"/>
<path d="M43,664 L47.68,666.70 A5.4,5.4 0 0 1 43.00,669.40 Z" fill="#00e000"/>
<path d="M43,664 L43.00,669.40 A5.4,5.4 0 0 1 38.32,666.70 Z" fill="#00e8e8"/>
<path d="M43,664 L38.32,666.70 A5.4,5.4 0 0 1 38.32,661.30 Z" fill="#0000ff"/>
<path d="M43,664 L38.32,661.30 A5.4,5.4 0 0 1 43.00,658.60 Z" fill="#e000e0"/>
<circle cx="41.6" cy="662.4" r="1.2" fill="#fff" fill-opacity="0.9"/>
<rect x="53.5" y="656.5" width="15" height="15" fill="#fff" stroke="#000"/>
<g stroke="#000" stroke-width="1" fill="none"><path d="M54,657 L68,671 M68,657 L54,671 M61,657 L68,664 L61,671 L54,664 Z"/></g>
<g shape-rendering="crispEdges"><rect x="458" y="657" width="3" height="7" fill="#fff"/><rect x="456" y="659" width="7" height="3" fill="#fff"/><rect x="459" y="658" width="1" height="5" fill="#000"/><rect x="457" y="660" width="5" height="1" fill="#000"/></g>
<g shape-rendering="crispEdges"><rect x="466" y="657" width="3" height="7" fill="#fff"/><rect x="464" y="659" width="7" height="3" fill="#fff"/><rect x="467" y="658" width="1" height="5" fill="#000"/><rect x="465" y="660" width="5" height="1" fill="#000"/></g>
<rect x="71" y="672" width="560" height="1" fill="#fbfbff"/>
<rect x="717" y="687" width="17" height="15" fill="#fff"/><path d="M717.5,702 V687.5 H734" fill="none" stroke="#000" stroke-width="1"/>
<circle cx="725.6" cy="694.8" r="4.4" fill="#0000f0" stroke="#101040" stroke-width="0.8"/><path d="M726.2,695.8 L726.2,701.2 L727.6,700 L728.6,702 L729.6,701.6 L728.6,699.6 L730.4,699.4 Z" fill="#fff" stroke="#000" stroke-width="0.7"/>
<path d="M744.8,691 Q748.6,687.4 752.2,690 Q755.6,693.6 751.4,697.4 L749,698" fill="none" stroke="#868686" stroke-width="2.5"/><path d="M742,699.5 H755" stroke="#868686" stroke-width="1" stroke-dasharray="1,1"/><path d="M743,692 L746,695" stroke="#b0b0b0" stroke-width="1" stroke-dasharray="1,1"/>
<circle cx="768.4" cy="696" r="3" fill="none" stroke="#868686" stroke-width="1.3"/><rect x="774.6" y="689" width="2.2" height="10.6" fill="#868686"/>
</svg>
</div></body></html>
